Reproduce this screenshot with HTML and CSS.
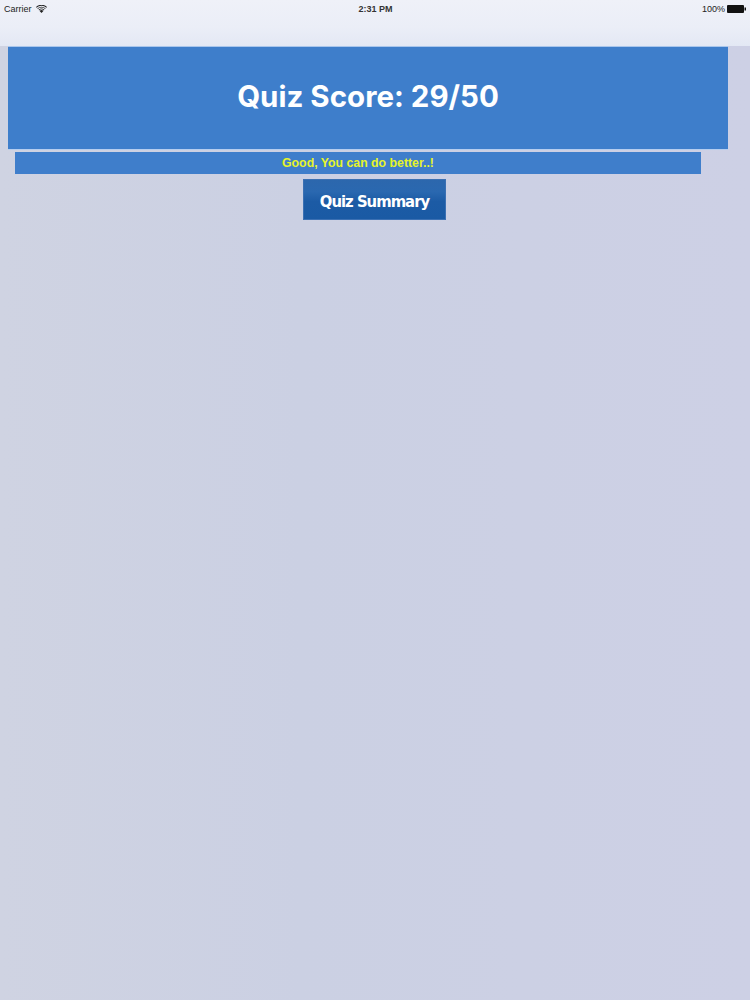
FILE: index.html
```html
<!DOCTYPE html>
<html>
<head>
<meta charset="utf-8">
<link rel="stylesheet" href="styles.css">
</head>
<body>
<div class="top">
  <div class="status">
    <div class="left">Carrier
      <svg class="wifi" width="11" height="8" viewBox="0 0 11 8"><path d="M5.5 8 L3.6 5.9 A2.8 2.8 0 0 1 7.4 5.9 Z" fill="#222"/><path d="M2.6 4.8 A4.2 4.2 0 0 1 8.4 4.8 L7.8 5.4 A3.4 3.4 0 0 0 3.2 5.4 Z" fill="#222"/><path d="M1.3 3.4 A6 6 0 0 1 9.7 3.4 L9.1 4.1 A5.1 5.1 0 0 0 1.9 4.1 Z" fill="#222"/><path d="M0 2 A7.8 7.8 0 0 1 11 2 L10.4 2.7 A6.9 6.9 0 0 0 0.6 2.7 Z" fill="#222"/></svg>
    </div>
    <div class="time">2:31 PM</div>
    <div class="right">100%
      <svg class="batt" width="20" height="8" viewBox="0 0 20 8"><rect x="0" y="0" width="17" height="8" rx="1" fill="#111"/><rect x="17.5" y="2.5" width="1.5" height="3" fill="#111"/></svg>
    </div>
  </div>
  <div class="navbar"></div>
</div>
<main class="content">
  <div class="score">Quiz Score: 29/50</div>
  <div class="msg">Good, You can do better..!</div>
  <div class="btnrow"><div class="btn">Quiz Summary</div></div>
</main>
</body>
</html>
```
FILE: styles.css
```css
html, body {
  margin: 0;
  padding: 0;
}
body {
  width: 750px;
  height: 1000px;
  background: linear-gradient(90deg, #cfd3e2 0%, #cbd0e3 40%, #cdd0e5 100%);
  font-family: "Liberation Sans", Arial, sans-serif;
  overflow: hidden;
}
.top {
  background: linear-gradient(180deg, #eff1f8 0%, #ebeef7 60%, #e3e8f4 100%);
}
.status {
  height: 17px;
  display: flex;
  align-items: center;
  justify-content: space-between;
  padding: 0 3px 0 4px;
  font-family: "Liberation Sans", Arial, sans-serif;
  font-size: 9px;
  color: #222;
}
.left, .right {
  display: flex;
  align-items: center;
  gap: 4px;
  width: 120px;
}
.right {
  justify-content: flex-end;
  gap: 2px;
}
.time {
  font-size: 9px;
  font-weight: 600;
  color: #333;
}
.navbar {
  height: 29px;
}
.content {
  display: flex;
  flex-direction: column;
}
.score {
  margin: 0 22px 0 8px;
  height: 104px;
  background: #3e7ecb;
  color: #fff;
  font-weight: bold;
  font-size: 29.5px;
  font-family: "Inter", "Liberation Sans", sans-serif;
  display: flex;
  align-items: center;
  justify-content: center;
  padding-bottom: 4px;
  border-top: 1px solid #a9c6ec;
  border-bottom: 1px solid #b5cdef;
  box-sizing: border-box;
}
.msg {
  margin: 2px 49px 0 15px;
  height: 22px;
  background: #3f7ecb;
  color: #e6f42a;
  font-weight: bold;
  font-size: 12.3px;
  font-family: "Liberation Sans", Arial, sans-serif;
  display: flex;
  align-items: center;
  justify-content: center;
}
.btnrow {
  display: flex;
  margin-top: 5px;
  padding-left: 303px;
}
.btn {
  width: 143px;
  height: 41px;
  background: linear-gradient(180deg, #2c67ad 0%, #2a68b0 30%, #1c5ba5 55%, #1a5aa4 100%);
  border: 1px solid #3b70b3;
  box-sizing: border-box;
  color: #fff;
  font-family: "DejaVu Sans Condensed", "Liberation Sans Narrow", sans-serif;
  font-stretch: condensed;
  font-weight: bold;
  font-size: 16.5px;
  display: flex;
  align-items: center;
  justify-content: center;
  padding-top: 3px;
  letter-spacing: -1px;
}
```
